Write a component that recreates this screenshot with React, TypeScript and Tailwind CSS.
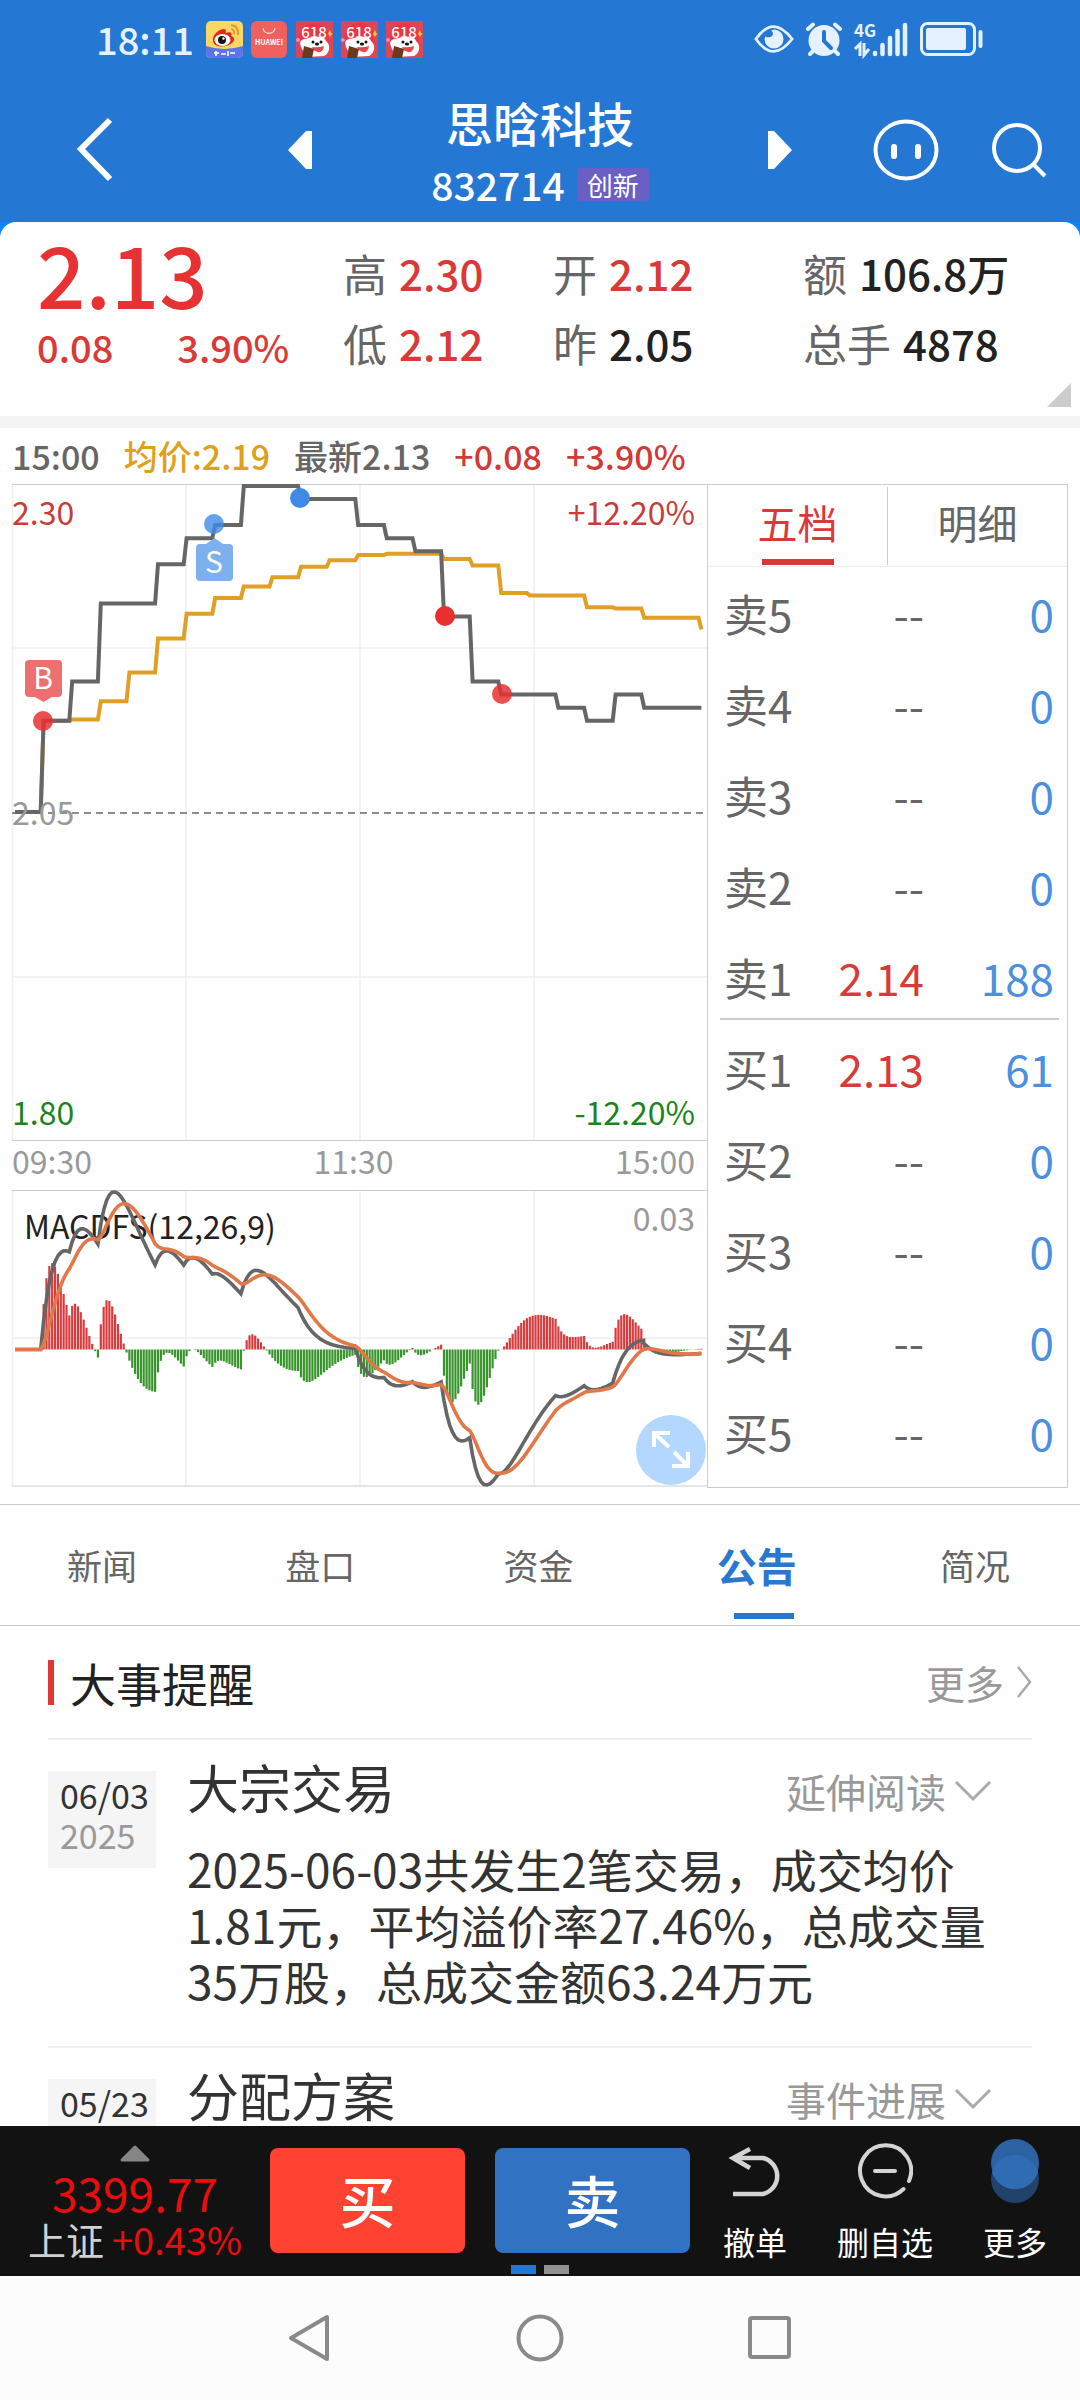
import React, { useState } from 'react';

interface Level {
  label: string;
  price: string;
  volume: string;
}

interface EventItem {
  day: string;
  year: string;
  title: string;
  action: string;
  body?: string;
}

const stats = [
  [
    { label: '高', value: '2.30', color: 'text-[#d93a38]' },
    { label: '低', value: '2.12', color: 'text-[#d93a38]' }
  ],
  [
    { label: '开', value: '2.12', color: 'text-[#d93a38]' },
    { label: '昨', value: '2.05', color: 'text-[#222222]' }
  ],
  [
    { label: '额', value: '106.8万', color: 'text-[#222222]' },
    { label: '总手', value: '4878', color: 'text-[#222222]' }
  ]
];

const asks: Level[] = [
  { label: '卖5', price: '--', volume: '0' },
  { label: '卖4', price: '--', volume: '0' },
  { label: '卖3', price: '--', volume: '0' },
  { label: '卖2', price: '--', volume: '0' },
  { label: '卖1', price: '2.14', volume: '188' }
];

const bids: Level[] = [
  { label: '买1', price: '2.13', volume: '61' },
  { label: '买2', price: '--', volume: '0' },
  { label: '买3', price: '--', volume: '0' },
  { label: '买4', price: '--', volume: '0' },
  { label: '买5', price: '--', volume: '0' }
];

const sections = ['新闻', '盘口', '资金', '公告', '简况'];

const events: EventItem[] = [
  {
    day: '06/03',
    year: '2025',
    title: '大宗交易',
    action: '延伸阅读',
    body: '2025-06-03共发生2笔交易，成交均价1.81元，平均溢价率27.46%，总成交量35万股，总成交金额63.24万元'
  },
  { day: '05/23', year: '2025', title: '分配方案', action: '事件进展' }
];

// The stock is matched once every ten minutes, so one value covers ten points
const PREV_CLOSE = 2.05;
const MINUTES = 241;
const priceSteps = [
  2.05, 2.12, 2.15, 2.21, 2.21, 2.24, 2.26, 2.27, 2.3, 2.3, 2.29, 2.29, 2.27,
  2.26, 2.25, 2.2, 2.15, 2.14, 2.14, 2.13, 2.12, 2.14, 2.13, 2.13, 2.13
];
const averageSteps = [
  2.05, 2.12, 2.121, 2.135, 2.157, 2.183, 2.202, 2.214, 2.223, 2.23, 2.238, 2.243, 2.247,
  2.248, 2.248, 2.244, 2.239, 2.218, 2.216, 2.216, 2.207, 2.206, 2.199, 2.199, 2.19
];

const perMinute = (steps: number[]) =>
  Array.from({ length: MINUTES }, (_, i) => steps[Math.floor(i / 10)]);

const minuteX = (i: number) => 3 + i * 2.86;
const priceY = (p: number) => 328 - (p - PREV_CLOSE) * 1304;

const toPoints = (values: number[], y: (v: number) => number) =>
  values.map((v, i) => `${minuteX(i).toFixed(1)},${y(v).toFixed(1)}`).join(' ');

const ema = (values: number[], n: number) => {
  const out = [values[0]];
  for (let i = 1; i < values.length; i++) {
    out.push((values[i] * 2 + out[i - 1] * (n - 1)) / (n + 1));
  }
  return out;
};

const prices = perMinute(priceSteps);
const averages = perMinute(averageSteps);
const slow = ema(prices, 26);
const diff = ema(prices, 12).map((v, i) => v - slow[i]);
const dea = ema(diff, 9);
const bars = diff.map((v, i) => 2 * (v - dea[i]));

const macdMax = Math.max(...diff);
const macdMin = Math.min(...diff);
const macdY = (v: number) => 2 + ((macdMax - v) / (macdMax - macdMin)) * 293;

const PriceChart: React.FC = () => (
  <svg viewBox="0 0 695 657" className="block w-full h-auto overflow-visible" fontSize="32" role="img" aria-label="分时图">
    <g stroke="#f0f0f0" strokeWidth="1.5" fill="none">
      <path d="M0.5 0V657M174 0V657M348 0V657M522 0V657M0 164H695M0 493H695" />
    </g>
    <path d="M0 0.5H695M0 656.5H695" stroke="#cccccc" strokeWidth="1" />
    <path d="M0 329H695" stroke="#8c8c8c" strokeWidth="2" strokeDasharray="7 5" />
    <polyline points={toPoints(averages, priceY)} fill="none" stroke="#dfa025" strokeWidth="4" />
    <polyline points={toPoints(prices, priceY)} fill="none" stroke="#666666" strokeWidth="4" />

    <text x="0" y="41" fill="#c83c3a">2.30</text>
    <text x="683" y="41" fill="#c83c3a" textAnchor="end">+12.20%</text>
    <text x="0" y="341" fill="#999999">2.05</text>
    <text x="0" y="641" fill="#1c841c">1.80</text>
    <text x="683" y="641" fill="#1c841c" textAnchor="end">-12.20%</text>

    {/* Trade markers */}
    <circle cx="31" cy="237" r="10" fill="#e83030" fillOpacity="0.85" />
    <rect x="13" y="176" width="37" height="37" rx="4" fill="#ee6f6f" />
    <path d="M23 213H40L31.500 218Z" fill="#ee6f6f" />
    <text x="31" y="205" fill="#ffffff" fontSize="30" textAnchor="middle">B</text>

    <circle cx="202" cy="40" r="10" fill="#4089e6" fillOpacity="0.8" />
    <rect x="184" y="60" width="37" height="37" rx="4" fill="#7eb0f0" />
    <path d="M194 60H211L202.500 54Z" fill="#7eb0f0" />
    <text x="202" y="89" fill="#ffffff" fontSize="30" textAnchor="middle">S</text>

    <circle cx="288" cy="14" r="10" fill="#4089e6" />
    <circle cx="433" cy="132" r="10" fill="#e83030" />
    <circle cx="490" cy="210" r="10" fill="#e83030" fillOpacity="0.85" />
  </svg>
);

const MacdChart: React.FC = () => (
  <svg viewBox="0 0 695 297" className="block w-full h-auto overflow-visible" fontSize="32" role="img" aria-label="MACD">
    <path d="M0.5 0V297M174 0V297M348 0V297M522 0V297M0 148H695" stroke="#f0f0f0" strokeWidth="1.5" />
    <path d="M0 0.5H695M0 296H695" stroke="#cccccc" strokeWidth="1" />
    {bars.map((v, i) => (
      <rect
        key={i}
        x={minuteX(i) - 1.1}
        y={Math.min(macdY(v), macdY(0))}
        width="2.2"
        height={Math.abs(macdY(v) - macdY(0))}
        fill={v >= 0 ? '#d93a3c' : '#37942a'}
      />
    ))}
    <text x="12" y="49" fill="#222222">MACDFS(12,26,9)</text>
    <text x="683" y="41" fill="#999999" textAnchor="end">0.03</text>
    <polyline points={toPoints(diff, macdY)} fill="none" stroke="#666666" strokeWidth="3.6" />
    <polyline points={toPoints(dea, macdY)} fill="none" stroke="#e27748" strokeWidth="3.6" />
  </svg>
);

const WeiboIcon: React.FC = () => (
  <svg viewBox="0 0 37 37" className="w-[37px] h-[37px]">
    <rect width="37" height="37" rx="5" fill="#fbd765" />
    <path d="M0 25Q18 31 37 25V32A5 5 0 0 1 32 37H5A5 5 0 0 1 0 32Z" fill="#5b74e8" />
    <path d="M7 20C6 14 13 8 18 8C21 8 19 11 20 12C24 10 27 12 25 15C29 16 29 20 26 22C21 27 8 27 7 20Z" fill="#dd2a1c" />
    <ellipse cx="16.500" cy="19" rx="8" ry="6" fill="#ffffff" />
    <circle cx="16" cy="19" r="4" fill="#111111" />
    <circle cx="17.500" cy="17.500" r="1.200" fill="#ffffff" />
    <path d="M25 8Q29 9 28 13M25 4Q33 5 32 14" fill="none" stroke="#e8962a" strokeWidth="1.800" />
    <path d="M8 32H13M10 30V35M15 33H20M22 30V35M24 32H29" stroke="#ffffff" strokeWidth="1.600" />
  </svg>
);

const HuaweiIcon: React.FC = () => (
  <svg viewBox="0 0 37 37" className="w-[37px] h-[37px]">
    <rect width="36" height="37" rx="6" fill="#f0605c" />
    <path d="M12 7C13 14 23 14 24 7" fill="none" stroke="#ffd9d6" strokeWidth="1.300" />
    <text x="18" y="24" fill="#ffffff" fontSize="7" fontWeight="700" textAnchor="middle">HUAWEI</text>
  </svg>
);

const SaleIcon: React.FC = () => (
  <svg viewBox="0 0 37 37" className="w-[37px] h-[37px] overflow-visible">
    <rect width="37" height="37" fill="#dd4658" />
    <circle cx="18" cy="17" r="15" fill="#ee3545" />
    <text x="18" y="17" fill="#ffffff" fontSize="15" fontWeight="500" textAnchor="middle">618</text>
    <path d="M4 22C5 17 11 18 13 17C19 15 29 15 30 20C35 24 34 32 28 35L10 36C8 30 5 28 4 22Z" fill="#ffffff" />
    <circle cx="17" cy="21" r="1.500" fill="#111111" />
    <circle cx="25" cy="21" r="1.500" fill="#111111" />
    <ellipse cx="21" cy="23" rx="2.200" ry="1.500" fill="#111111" />
    <path d="M16 26Q22 27 28 25Q27 32 22 31Q17 30 16 26Z" fill="#e5484f" />
    <path d="M8 25L18 28L16 37H6Z" fill="#6b3a1c" />
    <circle cx="2" cy="19" r="2" fill="#f08ac0" />
    <path d="M34 9L35 12L37 13L35 14L34 16L32 13Z" fill="#f8c23c" />
  </svg>
);

const StatusBar: React.FC = () => (
  <div className="flex items-center h-[78px] pl-24 pr-24 text-[#e6f1ff]">
    <span className="text-[38px] leading-[72px] font-medium">18:11</span>
    <div className="flex items-center gap-2 ml-3">
      <WeiboIcon />
      <HuaweiIcon />
      <SaleIcon />
      <SaleIcon />
      <SaleIcon />
    </div>
    <div className="flex items-center gap-3 ml-auto">
      <svg viewBox="0 0 42 30" className="w-10 h-[30px]">
        <path d="M2 15Q20 -11 40 15Q20 41 2 15Z" fill="none" stroke="currentColor" strokeWidth="3" />
        <path d="M21 5A10 10 0 1 1 11 15Q12 13 12 12A5 5 0 0 0 20 10Q20 7 18 6Z" fill="currentColor" />
      </svg>
      <svg viewBox="0 0 36 34" className="w-9 h-[34px]">
        <circle cx="18" cy="18.500" r="15.500" fill="currentColor" />
        <path d="M2 7L7 2.500M34 7L29 2.500M4 32L8 28M32 32L28 28" stroke="currentColor" strokeWidth="4" strokeLinecap="round" />
        <path d="M18 10V19L25 26" fill="none" stroke="#2577d4" strokeWidth="4" strokeLinecap="round" />
      </svg>
      <svg viewBox="0 0 54 36" className="w-[54px] h-9 overflow-visible">
        <text x="0" y="16" fill="currentColor" fontSize="17" fontWeight="700">4G</text>
        <path d="M1 28L6 23V35M10 22V34L15 28" fill="none" stroke="currentColor" strokeWidth="3" />
        <path d="M21 32V33M28.500 24V33M36 17V33M43.500 10V33M51 4V33" stroke="currentColor" strokeWidth="4.500" strokeLinecap="round" />
      </svg>
      <svg viewBox="0 0 64 34" className="w-16 h-[34px]">
        <rect x="1.500" y="1.500" width="53" height="31" rx="6" fill="none" stroke="currentColor" strokeWidth="3" />
        <rect x="6" y="6" width="40" height="22" rx="2" fill="currentColor" />
        <path d="M60.500 10V24" stroke="currentColor" strokeWidth="4" strokeLinecap="round" />
      </svg>
    </div>
  </div>
);

const TitleBar: React.FC = () => (
  <div className="grid grid-cols-[1fr_456px_1fr] items-center h-36 text-white">
    <div className="flex items-center justify-between pl-[76px]">
      <button type="button" aria-label="返回">
        <svg viewBox="0 0 38 66" className="w-[38px] h-[66px]">
          <path d="M34 3L5 32L34 62" fill="none" stroke="currentColor" strokeWidth="6" />
        </svg>
      </button>
      <button type="button" aria-label="上一只">
        <svg viewBox="0 0 24 40" className="w-6 h-10">
          <path d="M0 20L18 1H24V39H18Z" fill="currentColor" />
        </svg>
      </button>
    </div>
    <div className="flex flex-col items-center gap-[14px]">
      <h1 className="text-[47px] leading-[54px] font-medium">思晗科技</h1>
      <div className="flex items-center gap-3">
        <span className="text-[39px] leading-[42px] font-medium">832714</span>
        <span className="px-[10px] text-[26px] leading-[33px] rounded-sm bg-[#6a60c4]">创新</span>
      </div>
    </div>
    <div className="flex items-center gap-[53px] pr-8">
      <button type="button" aria-label="下一只" className="mr-auto">
        <svg viewBox="0 0 24 40" className="w-6 h-10">
          <path d="M24 20L6 1H0V39H6Z" fill="currentColor" />
        </svg>
      </button>
      <button type="button" aria-label="智能助手">
        <svg viewBox="0 0 66 62" className="w-[66px] h-[62px]">
          <ellipse cx="33" cy="31" rx="30.500" ry="28.500" fill="none" stroke="currentColor" strokeWidth="4" />
          <path d="M21 28V37M45 28V37" stroke="currentColor" strokeWidth="6" strokeLinecap="round" />
        </svg>
      </button>
      <button type="button" aria-label="搜索">
        <svg viewBox="0 0 56 56" className="w-14 h-14">
          <circle cx="25" cy="26" r="23" fill="none" stroke="currentColor" strokeWidth="4" />
          <path d="M41 42L53 54" stroke="currentColor" strokeWidth="4" />
        </svg>
      </button>
    </div>
  </div>
);

const Summary: React.FC = () => (
  <section className="relative grid grid-cols-[306fr_210fr_250fr_277fr] h-[194px] pl-[37px] rounded-t-2xl bg-white">
    <div className="text-[#d93a38]">
      <div className="text-[85px] leading-[100px] font-medium text-[#e63232]">2.13</div>
      <div className="flex gap-16 text-[38px] leading-[50px] font-medium">
        <span>0.08</span>
        <span>3.90%</span>
      </div>
    </div>
    {stats.map((column) => (
      <dl key={column[0].label} className="pt-4 text-[44px] leading-[70px]">
        {column.map((item) => (
          <div key={item.label} className="flex gap-3 whitespace-nowrap">
            <dt className="text-[#666666]">{item.label}</dt>
            <dd className={`text-[42px] font-medium ${item.color}`}>{item.value}</dd>
          </div>
        ))}
      </dl>
    ))}
    <svg viewBox="0 0 24 24" className="absolute right-[9px] bottom-[9px] w-6 h-6">
      <path d="M24 0V24H0Z" fill="#cccccc" />
    </svg>
  </section>
);

const LevelRows: React.FC<{ levels: Level[] }> = ({ levels }) => (
  <>
    {levels.map((level) => (
      <tr key={level.label} className="h-[91px]">
        <th scope="row" className="w-[90px] pl-4 text-left font-normal text-[#666666]">{level.label}</th>
        <td className={level.price === '--' ? 'text-right text-[#666666]' : 'text-right text-[#d93a38]'}>{level.price}</td>
        <td className="w-[143px] pr-[13px] text-right text-[#4a8fe0]">{level.volume}</td>
      </tr>
    ))}
  </>
);

const OrderBook: React.FC = () => {
  const [tab, setTab] = useState('五档');

  return (
    <aside className="w-[361px] shrink-0 pb-[10px] border border-[#cccccc]">
      <div className="flex items-center h-[82px] border-b border-[#eeeeee]">
        {['五档', '明细'].map((name, i) => (
          <button
            key={name}
            type="button"
            onClick={() => setTab(name)}
            className={`flex flex-col flex-1 h-[78px] items-center justify-between text-[40px] leading-[70px] ${
              i === 0 ? 'border-r border-[#cccccc]' : ''
            } ${tab === name ? 'text-[#d93a38]' : 'text-[#666666]'}`}
          >
            {name}
            {tab === name && <span className="w-[72px] h-[6px] bg-[#d93a38]" />}
          </button>
        ))}
      </div>
      <table className="w-full text-[44px] leading-[60px]">
        <tbody>
          <LevelRows levels={asks} />
        </tbody>
      </table>
      <hr className="-mt-1 mb-[2px] ml-3 mr-2 border-t-2 border-[#cccccc]" />
      <table className="w-full text-[44px] leading-[60px]">
        <tbody>
          <LevelRows levels={bids} />
        </tbody>
      </table>
    </aside>
  );
};

const Quote: React.FC = () => (
  <section className="px-3">
    <div className="flex h-14 items-center gap-6 text-[34px] leading-[52px] font-medium whitespace-nowrap">
      <span className="text-[#666666]">15:00</span>
      <span className="text-[#dfa01c]">均价:2.19</span>
      <span className="text-[#666666]">最新2.13</span>
      <span className="text-[#d03a38]">+0.08</span>
      <span className="text-[#d03a38]">+3.90%</span>
    </div>
    <div className="flex items-start">
      <div className="flex-1 min-w-0">
        <PriceChart />
        <div className="flex justify-between h-[49px] pr-3 text-[32px] leading-[38px] text-[#999999]">
          <span>09:30</span>
          <span>11:30</span>
          <span>15:00</span>
        </div>
        <div className="relative">
          <MacdChart />
          <button type="button" aria-label="全屏" className="absolute right-px bottom-[2px] w-[70px] h-[70px] rounded-full bg-[#b3d7ff]">
            <svg viewBox="0 0 70 70" className="w-full h-full">
              <path d="M18 32V18H34M19 19L33 32M38 37L51 50M52 37V51H36" fill="none" stroke="#ffffff" strokeWidth="4" />
            </svg>
          </button>
        </div>
      </div>
      <OrderBook />
    </div>
  </section>
);

const SectionTabs: React.FC = () => {
  const [active, setActive] = useState('公告');

  return (
    <nav className="flex justify-between h-[122px] mt-4 pl-[67px] pr-[70px] border-y border-[#cccccc]">
      {sections.map((name) => (
        <button
          key={name}
          type="button"
          onClick={() => setActive(name)}
          className={`relative flex justify-center w-[70px] leading-[120px] whitespace-nowrap ${
            active === name ? 'text-[40px] font-bold text-[#2878d0]' : 'text-[35px] text-[#666666]'
          }`}
        >
          {name}
          {active === name && <span className="absolute left-3 bottom-[6px] w-[60px] h-[6px] bg-[#2878d0]" />}
        </button>
      ))}
    </nav>
  );
};

const Events: React.FC = () => (
  <section className="px-12">
    <div className="flex items-center justify-between h-[112px]">
      <h2 className="flex items-center gap-4 text-[46px] leading-[60px] text-[#222222]">
        <span className="w-[6px] h-[45px] bg-[#e03636]" />
        大事提醒
      </h2>
      <a href="#events" className="flex items-center gap-3 text-[39px] leading-[56px] text-[#999999]">
        更多
        <svg viewBox="0 0 16 34" className="w-4 h-[34px]">
          <path d="M2 2L14 17L2 32" fill="none" stroke="#aaaaaa" strokeWidth="2.500" />
        </svg>
      </a>
    </div>
    {events.map((item) => (
      <article key={item.day} className="flex items-start gap-[31px] pb-[38px] border-t-2 border-[#efefef]">
        <time className="w-[108px] h-[97px] mt-[31px] pl-3 pt-1 text-[34px] leading-[40px] text-[#333333] bg-[#f5f5f5]">
          {item.day}
          <span className="block text-[#999999]">{item.year}</span>
        </time>
        <div className="flex-1 pt-3 pr-10">
          <div className="flex items-center justify-between">
            <h3 className="text-[52px] leading-[70px] text-[#333333]">{item.title}</h3>
            <button type="button" className="flex items-center gap-2 pt-2 text-[40px] leading-[56px] text-[#999999]">
              {item.action}
              <svg viewBox="0 0 38 22" className="w-[38px] h-[22px]">
                <path d="M2 2L19 19L36 2" fill="none" stroke="#aaaaaa" strokeWidth="3" />
              </svg>
            </button>
          </div>
          {item.body && <p className="mt-[18px] text-[46px] leading-[56px] text-[#333333]">{item.body}</p>}
        </div>
      </article>
    ))}
  </section>
);

const TradeBar: React.FC = () => (
  <footer className="relative flex h-[150px] shrink-0 bg-[#121212] text-white">
    <div className="flex flex-col w-[270px] items-center pt-[19px]">
      <svg viewBox="0 0 30 17" className="w-[30px] h-[17px]">
        <path d="M15 2L28 15H2Z" fill="#878484" stroke="#878484" strokeWidth="3" strokeLinejoin="round" />
      </svg>
      <div className="mt-1 text-[46px] leading-[52px] text-[#e80e0e]">3399.77</div>
      <div className="flex gap-2 text-[38px] leading-[42px] text-[#e80e0e]">
        <span className="text-[#d0d0d0]">上证</span>
        +0.43%
      </div>
    </div>
    <div className="flex gap-[30px] pt-[22px] text-[56px] leading-[98px] font-medium">
      <button type="button" className="w-[195px] h-[105px] pb-1 rounded-lg bg-[#ff4232]">买</button>
      <button type="button" className="w-[195px] h-[105px] pb-1 rounded-lg bg-[#3173c2]">卖</button>
    </div>
    <div className="grid flex-1 grid-cols-3 pt-3 text-[32px] leading-[38px] whitespace-nowrap">
      <button type="button" className="flex flex-col items-center justify-start gap-4">
        <svg viewBox="0 0 56 68" className="w-14 h-[68px]">
          <path d="M23 11L6 20L23 30M7 20H36A18.500 18.500 0 0 1 36 56H6" fill="none" stroke="#d4d4d4" strokeWidth="4.500" />
        </svg>
        撤单
      </button>
      <button type="button" className="flex flex-col items-center justify-start gap-4">
        <svg viewBox="0 0 56 68" className="w-14 h-[68px]">
          <path d="M46.500 51A25.500 25.500 0 1 1 52 43M18 33H38" fill="none" stroke="#d4d4d4" strokeWidth="4" strokeLinecap="round" />
        </svg>
        删自选
      </button>
      <button type="button" className="flex flex-col items-center justify-start gap-4">
        <svg viewBox="0 0 56 68" className="w-14 h-[68px]">
          <circle cx="28" cy="41" r="24" fill="#224269" />
          <circle cx="28" cy="25" r="24" fill="#2c62a2" />
          <path d="M5 34A24 24 0 0 1 51 34A24 24 0 0 1 5 34Z" fill="#2f6cb4" />
        </svg>
        更多
      </button>
    </div>
    <div className="absolute inset-x-0 bottom-[2px] flex justify-center gap-2">
      <span className="w-[25px] h-[9px] bg-[#2478d4]" />
      <span className="w-[25px] h-[9px] bg-[#919191]" />
    </div>
  </footer>
);

const SystemNav: React.FC = () => (
  <div className="flex h-[124px] shrink-0 items-center justify-center gap-[180px] bg-[#fcfcfc]">
    <button type="button" aria-label="返回">
      <svg viewBox="0 0 50 50" className="w-[50px] h-[50px]">
        <path d="M42 4V46L6 25Z" fill="none" stroke="#8a8a8a" strokeWidth="4" strokeLinejoin="round" />
      </svg>
    </button>
    <button type="button" aria-label="主屏幕">
      <svg viewBox="0 0 50 50" className="w-[50px] h-[50px]">
        <circle cx="25" cy="25" r="21.500" fill="none" stroke="#8a8a8a" strokeWidth="4" />
      </svg>
    </button>
    <button type="button" aria-label="最近任务">
      <svg viewBox="0 0 50 50" className="w-[50px] h-[50px]">
        <rect x="5" y="5" width="39" height="39" rx="2" fill="none" stroke="#8a8a8a" strokeWidth="4" />
      </svg>
    </button>
  </div>
);

const App: React.FC = () => {
  return (
    <div className="flex flex-col h-screen bg-white font-['Noto_Sans_CJK_SC',sans-serif]">
      <header className="shrink-0 bg-[#2577d4]">
        <StatusBar />
        <TitleBar />
      </header>
      <main className="flex-1 min-h-0 overflow-hidden">
        <div className="bg-[#0a84ff]">
          <Summary />
        </div>
        <div className="h-3 bg-[#f4f4f4]" />
        <Quote />
        <SectionTabs />
        <Events />
      </main>
      <TradeBar />
      <SystemNav />
    </div>
  );
};

export default App;
